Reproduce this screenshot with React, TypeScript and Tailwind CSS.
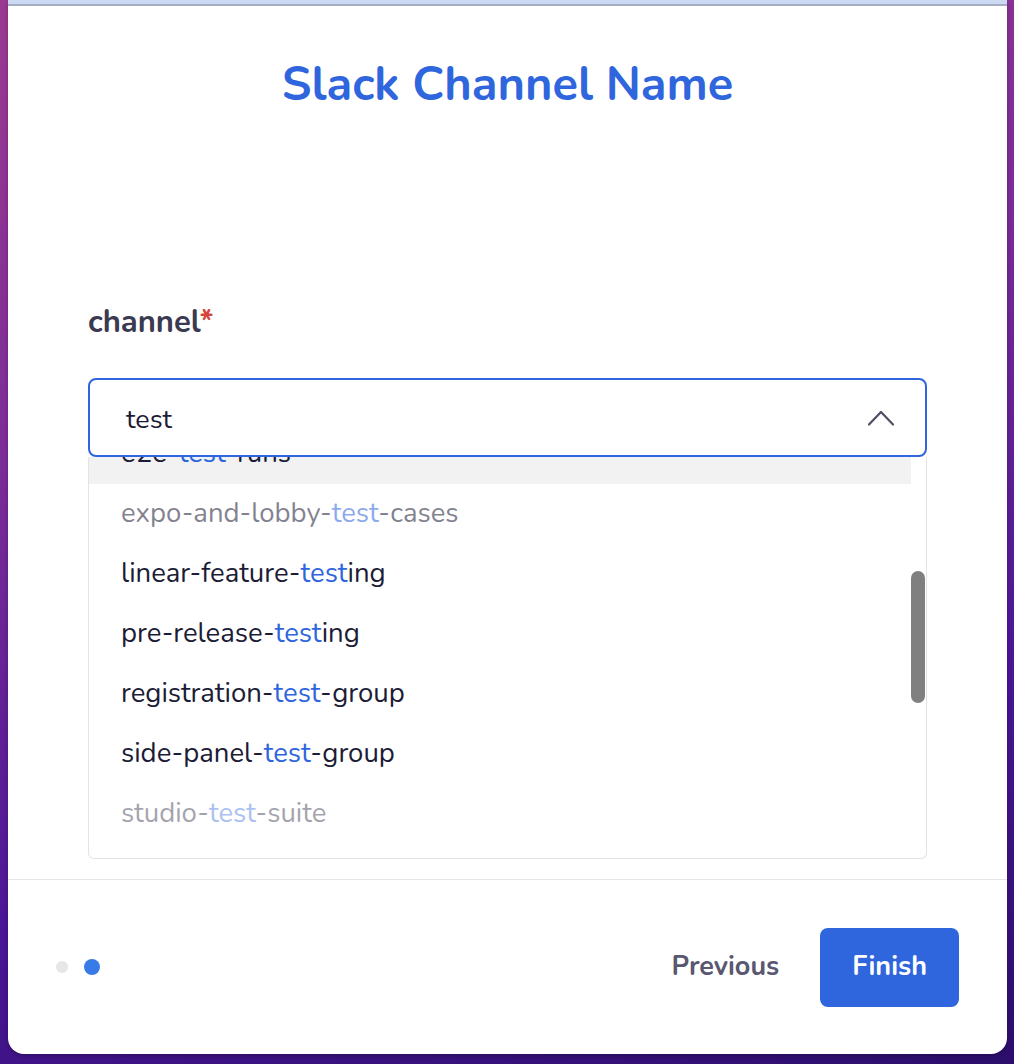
import React from "react";

const channels = [
  { name: "e2e-test-runs", active: true, fade: "opacity-100" },
  { name: "expo-and-lobby-test-cases", fade: "opacity-55" },
  { name: "linear-feature-testing", fade: "opacity-100" },
  { name: "pre-release-testing", fade: "opacity-100" },
  { name: "registration-test-group", fade: "opacity-100" },
  { name: "side-panel-test-group", fade: "opacity-100" },
  { name: "studio-test-suite", fade: "opacity-40" },
];

const Highlight = ({ text, query }: { text: string; query: string }) => {
  const parts = text.split(query);
  return (
    <span>
      {parts.map((p, i) => (
        <React.Fragment key={i}>
          {p}
          {i < parts.length - 1 && <span className="text-[#2f66dd]">{query}</span>}
        </React.Fragment>
      ))}
    </span>
  );
};

const App = () => {
  return (
    <div
      className="w-full h-[1064px] pl-2 pr-[7px] pb-[10px] bg-[linear-gradient(165deg,#9a3a92_0%,#7c2c98_35%,#4a1696_70%,#2c0e6c_100%)]"
      style={{ fontFamily: "Nunito, Lato, 'Open Sans', sans-serif" }}
    >
      <div className="w-full h-[1054px] bg-white rounded-b-2xl shadow-[0_2px_4px_rgba(0,0,0,0.25)] flex flex-col">
        <div className="h-1 bg-[#cbd9f2]" />
        <div className="h-[2px] bg-[#a6adc3]" />

        <h1 className="mt-[51px] h-[56px] leading-[56px] text-center text-[47px] font-bold text-[#2f66dd]">
          Slack Channel Name
        </h1>

        <div className="px-20 mt-[192px]">
          <label className="block h-[34px] leading-[34px] text-[31px] font-bold text-[#3a3a50]">
            channel<span className="text-[#d6463c]">*</span>
          </label>

          <div className="mt-[39px] relative z-10 h-[79px] border-2 border-[#2f66dd] rounded-lg bg-white pl-9 pr-[31px] flex items-center justify-between">
            <span className="pt-[6px] text-[27px] text-[#1c1c36]">test</span>
            <svg width="26" height="16" viewBox="0 0 26 16" fill="none">
              <path d="M1 14.5L13 2L25 14.5" stroke="#4f4f63" strokeWidth="2.2" strokeLinecap="round" strokeLinejoin="round" />
            </svg>
          </div>

          <div className="h-[402px] border border-t-0 border-[#e3e3e3] rounded-b-md overflow-hidden flex">
            <div className="flex-1 -mt-[33px]">
              {channels.map((c) => (
                <div
                  key={c.name}
                  className={`h-[60px] flex items-center pl-[32px] text-[27.5px] text-[#1c1c36] ${c.fade} ${c.active ? "bg-[#f2f2f2]" : ""}`}
                >
                  <Highlight text={c.name} query="test" />
                </div>
              ))}
            </div>
            <div className="w-[14px] mr-px">
              <div className="mt-[114px] h-[132px] rounded-full bg-[#808080]" />
            </div>
          </div>
        </div>

        <div className="mt-5 h-px bg-[#e5e5e5]" />

        <div className="flex-1 px-12 flex items-center justify-between">
          <div className="flex items-center gap-4">
            <span className="w-3 h-3 rounded-full bg-[#e6e6e6]" />
            <span className="w-4 h-4 rounded-full bg-[#387ae8]" />
          </div>
          <div className="flex items-center gap-[41px]">
            <button className="text-[27px] font-bold text-[#5a5870]">Previous</button>
            <button className="h-[79px] px-8 rounded-lg bg-[#2f66dd] text-white text-[27px] font-bold">
              Finish
            </button>
          </div>
        </div>
      </div>
    </div>
  );
};

export default App;
